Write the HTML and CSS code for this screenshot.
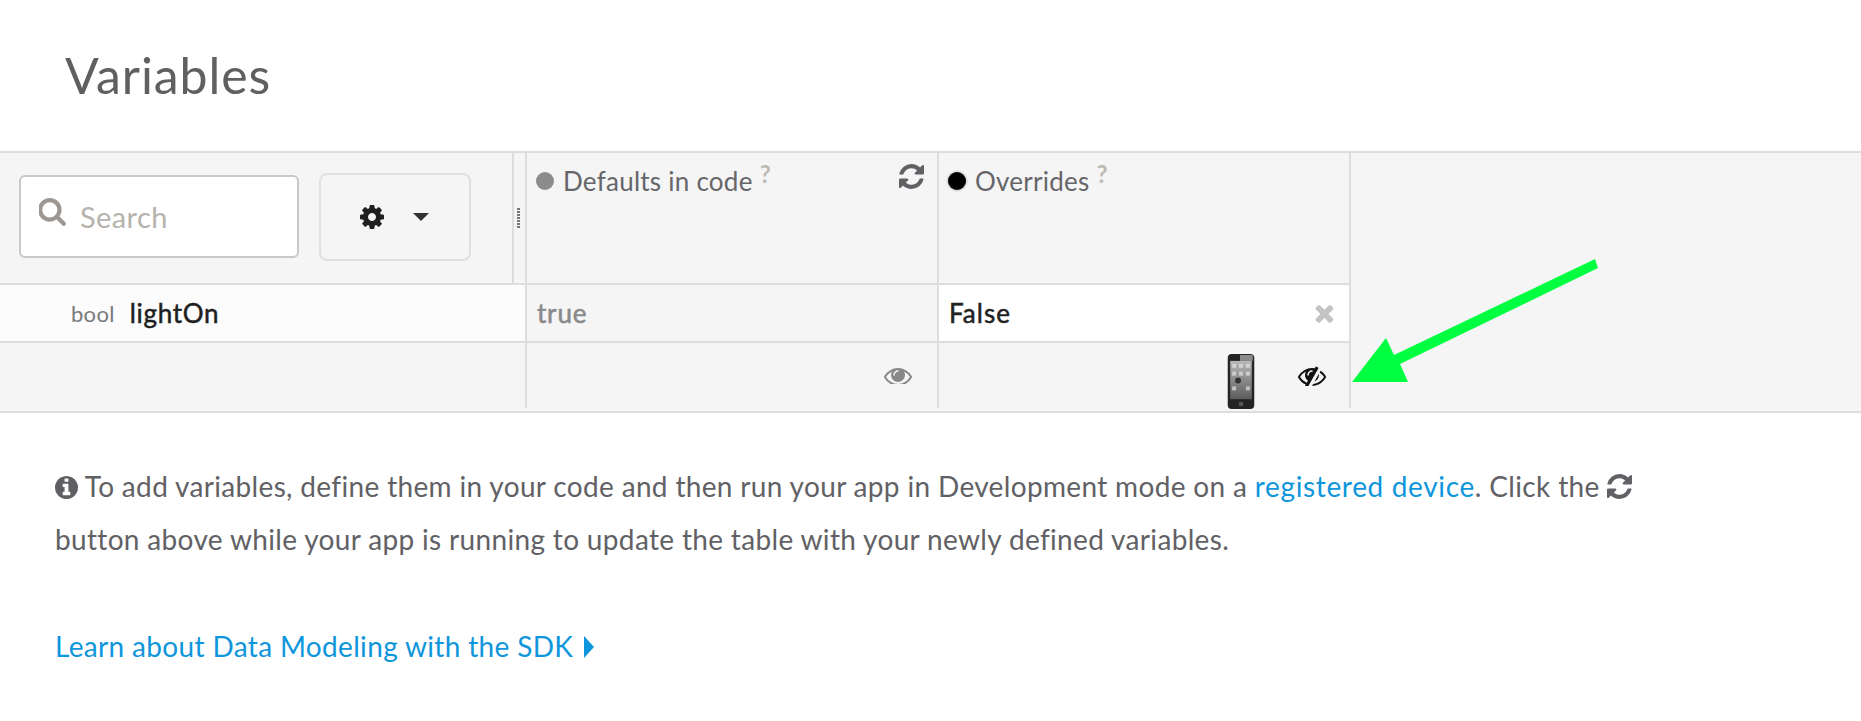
FILE: index.html
```html
<!DOCTYPE html>
<html lang="en">
<head>
<meta charset="utf-8">
<title>Variables</title>
<link rel="stylesheet" href="styles.css">
</head>
<body>
<svg class="defs" width="0" height="0" aria-hidden="true">
  <symbol id="i-refresh" viewBox="128 128 1536 1536"><path d="M1639 1056q0 5-1 7-64 268-268 434.500t-478 166.500q-146 0-282.500-55t-243.500-157l-129 129q-19 19-45 19t-45-19-19-45v-448q0-26 19-45t45-19h448q26 0 45 19t19 45-19 45l-137 137q71 66 161 102t187 36q134 0 250-65t186-179q11-17 53-117 8-23 30-23h192q13 0 22.500 9.500t9.500 22.500zm25-800v448q0 26-19 45t-45 19h-448q-26 0-45-19t-19-45 19-45l138-138q-148-137-349-137-134 0-250 65t-186 179q-11 17-53 117-8 23-30 23h-199q-13 0-22.500-9.500t-9.500-22.500v-7q65-268 270-434.500t480-166.500q146 0 284 55.500t245 156.500l130-129q19-19 45-19t45 19 19 45z"/></symbol>
</svg>
<main class="page">
  <h1 class="title">Variables</h1>
  <section class="band">
    <div class="head-left">
      <div class="tools">
        <div class="search">
          <svg class="search-icon" viewBox="128 128 1600 1664"><path d="M1216 832q0-185-131.500-316.500t-316.500-131.500-316.500 131.500-131.500 316.500 131.500 316.500 316.500 131.500 316.500-131.500 131.500-316.500zm512 832q0 52-38 90t-90 38q-54 0-90-38l-343-342q-179 124-399 124-143 0-273.500-55.500t-225-150-150-225-55.500-273.500 55.500-273.500 150-225 225-150 273.500-55.500 273.500 55.500 225 150 150 225 55.500 273.500q0 220-124 399l343 343q37 37 37 90z"/></svg>
          <span class="placeholder">Search</span>
        </div>
        <div class="gear-btn">
          <svg class="gear" viewBox="128 128 1536 1536"><path d="M1152 896q0-106-75-181t-181-75-181 75-75 181 75 181 181 75 181-75 75-181zm512-109v222q0 12-8 23t-20 13l-185 28q-19 54-39 91 35 50 107 138 10 12 10 25t-9 23q-27 37-99 108t-94 71q-12 0-26-9l-138-108q-44 23-91 38-16 136-29 186-7 28-36 28h-222q-14 0-24.500-8.500t-11.500-21.500l-28-184q-49-16-90-37l-141 107q-10 9-25 9-14 0-25-11-126-114-165-168-7-10-7-23 0-12 8-23 15-21 51-66.500t54-70.500q-27-50-41-99l-183-27q-13-2-21-12.500t-8-23.500v-222q0-12 8-23t19-13l186-28q14-46 39-92-40-57-107-138-10-12-10-24 0-10 9-23 26-36 98.500-107.500t94.500-71.500q13 0 26 10l138 107q44-23 91-38 16-136 29-186 7-28 36-28h222q14 0 24.500 8.500t11.500 21.500l28 184q49 16 90 37l142-107q9-9 24-9 13 0 25 10 129 119 165 170 7 8 7 22 0 12-8 23-15 21-51 66.500t-54 70.500q26 50 41 98l183 28q13 2 21 12.500t8 23.500z"/></svg>
          <span class="caret"></span>
        </div>
      </div>
      <div class="grip"><span class="grip-dots"></span></div>
    </div>
    <div class="head-col">
      <span class="dot dot-grey"></span>
      <span class="head-label">Defaults in code</span>
      <sup class="help">?</sup>
      <svg class="head-refresh"><use href="#i-refresh"/></svg>
    </div>
    <div class="head-col head-last">
      <span class="dot dot-black"></span>
      <span class="head-label">Overrides</span>
      <sup class="help">?</sup>
    </div>
    <div class="side"></div>

    <div class="name-cell"><span class="type">bool</span><span class="name">lightOn</span></div>
    <div class="default-cell">true</div>
    <div class="override-cell">
      <span class="override-value">False</span>
      <svg class="clear" viewBox="300 300 1200 1260"><path d="M1490 1322q0 40-28 68l-136 136q-28 28-68 28t-68-28l-294-294-294 294q-28 28-68 28t-68-28l-136-136q-28-28-28-68t28-68l294-294-294-294q-28-28-28-68t28-68l136-136q28-28 68-28t68 28l294 294 294-294q28-28 68-28t68 28l136 136q28 28 28 68t-28 68l-294 294 294 294q28 28 28 68z"/></svg>
    </div>

    <div class="foot-left"></div>
    <div class="foot-default">
      <svg class="eye" viewBox="0 384 1792 1024"><path d="M1664 960q-152-236-381-353 61 104 61 225 0 185-131.500 316.500t-316.500 131.500-316.500-131.500-131.500-316.500q0-121 61-225-229 117-381 353 133 205 333.500 326.500t434.500 121.500 434.500-121.500 333.500-326.500zm-720-384q0-20-14-34t-34-14q-125 0-214.500 89.500t-89.500 214.500q0 20 14 34t34 14 34-14 14-34q0-86 61-147t147-61q20 0 34-14t14-34zm848 384q0 34-20 69-140 230-376.500 368.500t-499.500 138.500-499.500-139-376.500-368q-20-35-20-69t20-69q140-229 376.500-368t499.500-139 499.500 139 376.500 368q20 35 20 69z"/></svg>
    </div>
    <div class="foot-override">
      <svg class="phone" viewBox="0 0 28 56">
        <defs>
          <linearGradient id="phone-screen" x1="0" y1="0" x2="0" y2="1">
            <stop offset="0" stop-color="#b8b8b8"/>
            <stop offset="1" stop-color="#5c5c5c"/>
          </linearGradient>
        </defs>
        <rect x="0.5" y="0" width="27" height="56" rx="4" fill="#242424"/>
        <rect x="13" y="1" width="13" height="6" fill="#8a8a8a"/>
        <rect x="3" y="7" width="22" height="39" fill="url(#phone-screen)"/>
        <g fill="#e4e4e4" opacity="0.7">
          <rect x="5" y="10" width="4" height="4"/><rect x="12" y="10" width="4" height="4"/><rect x="19" y="10" width="4" height="4"/>
          <rect x="5" y="18" width="4" height="4"/><rect x="12" y="18" width="4" height="4"/><rect x="19" y="18" width="4" height="4"/>
          <rect x="5" y="33" width="4" height="4"/><rect x="19" y="33" width="4" height="4"/>
        </g>
        <circle cx="11" cy="27" r="3" fill="#333"/>
        <circle cx="14" cy="51" r="2.5" fill="#555"/>
      </svg>
      <svg class="eye-off" viewBox="0 256 1792 1280"><path d="M555 1335l78-141q-87-63-136-159t-49-203q0-121 61-225-229 117-381 353 167 258 427 375zm389-759q0-20-14-34t-34-14q-125 0-214.500 89.500t-89.500 214.500q0 20 14 34t34 14 34-14 14-34q0-86 61-147t147-61q20 0 34-14t14-34zm363-191q0 7-1 9-106 189-316 567t-315 566l-49 89q-10 16-28 16-12 0-134-70-16-10-16-28 0-12 44-87-143-65-263.500-173t-208.500-245q-20-31-20-69t20-69q153-235 380-371t496-136q89 0 180 17l54-97q10-16 28-16 5 0 18 6t31 15.500 33 18.500 31.500 18.500 19.500 11.500q16 10 16 27zm37 447q0 139-79 253.500t-209 164.500l280-502q8 45 8 84zm448 128q0 35-20 69-39 64-109 145-150 172-347.500 267t-419.500 95l74-132q212-18 392.500-137t301.500-307q-115-179-282-294l63-112q95 64 182.500 153t144.500 184q20 34 20 69z"/></svg>
    </div>
    <svg class="arrow" viewBox="1352 259 246 123"><path d="M1595 259 L1598 268 L1400 364 L1408 382 L1352 382 L1386 338 L1394 355 Z"/></svg>
  </section>
  <section class="notes">
    <p class="note">
      <svg class="info" viewBox="128 128 1536 1536"><path d="M1152 1376v-160q0-14-9-23t-23-9h-96v-512q0-14-9-23t-23-9h-320q-14 0-23 9t-9 23v160q0 14 9 23t23 9h96v320h-96q-14 0-23 9t-9 23v160q0 14 9 23t23 9h448q14 0 23-9t9-23zm-128-896v-160q0-14-9-23t-23-9h-192q-14 0-23 9t-9 23v160q0 14 9 23t23 9h192q14 0 23-9t9-23zm640 416q0 209-103 385.500t-279.500 279.500-385.500 103-385.500-103-279.500-279.500-103-385.500 103-385.500 279.500-279.500 385.500-103 385.500 103 279.500 279.500 103 385.500z"/></svg>
      To add variables, define them in your code and then run your app in Development mode on a <a class="link link-wide" href="#">registered device</a>. Click the <svg class="inline-refresh"><use href="#i-refresh"/></svg><br>
      button above while your app is running to update the table with your newly defined variables.
    </p>
    <p class="learn"><a class="link" href="#">Learn about Data Modeling with the SDK</a><span class="learn-caret"></span></p>
  </section>
</main>
</body>
</html>
```

FILE: styles.css
```css
* { box-sizing: border-box; }
html, body { margin: 0; padding: 0; background: #fff; }
body {
  font-family: "Lato", "Liberation Sans", sans-serif;
  color: #616165;
  overflow: hidden;
}
.defs { position: absolute; }
.page { width: 1861px; height: 721px; }

.title {
  margin: 0;
  height: 151px;
  padding: 47px 0 0 65px;
  font-size: 50px;
  line-height: 56px;
  letter-spacing: .9px;
  font-weight: 400;
  color: #606063;
}

.band {
  position: relative;
  display: grid;
  grid-template-columns: 525px 412px 414px 1fr;
  grid-template-rows: 130px 58px 70px;
  height: 262px;
  background: #f5f5f5;
  border-top: 2px solid #ddd;
  border-bottom: 2px solid #ddd;
}

.head-left { display: flex; }
.tools {
  width: 514px;
  display: flex;
  align-items: center;
  gap: 20px;
  padding: 0 0 2px 19px;
  border-right: 2px solid #ddd;
}
.search {
  width: 280px;
  height: 83px;
  margin-top: -2px;
  display: flex;
  align-items: center;
  gap: 14px;
  padding: 0 0 0 18px;
  background: #fff;
  border: 2px solid #c9c9c9;
  border-radius: 6px;
}
.search-icon { width: 27px; height: 28px; fill: #9c9792; margin-top: -9px; filter: blur(.5px); }
.placeholder { font-size: 29px; letter-spacing: .4px; color: #b6b3ae; }
.gear-btn {
  width: 152px;
  height: 88px;
  display: flex;
  align-items: center;
  justify-content: center;
  gap: 29px;
  border: 2px solid #e0e0e0;
  border-radius: 8px;
}
.gear { width: 24px; height: 24px; fill: #1f1f1f; margin-left: -2px; }
.caret {
  width: 0;
  height: 0;
  border-left: 8px solid transparent;
  border-right: 8px solid transparent;
  border-top: 8px solid #333;
}
.grip { flex: 1; display: flex; align-items: center; justify-content: center; }
.grip-dots {
  width: 3px;
  height: 20px;
  margin-left: -2px;
  background: repeating-linear-gradient(#777 0 2px, transparent 2px 3px);
}

.head-col {
  position: relative;
  display: flex;
  align-items: flex-start;
  padding: 16px 0 0 9px;
  border-left: 2px solid #ddd;
}
.head-last { border-right: 2px solid #ddd; }
.dot { width: 18px; height: 18px; border-radius: 50%; margin: 3px 9px 0 0; }
.dot-grey { background: #8c8c8c; }
.dot-black { background: #000; box-shadow: 0 0 3px #999; }
.head-label { font-size: 26px; line-height: 25px; letter-spacing: .25px; color: #66666a; }
.help {
  font-size: 24px;
  line-height: 15px;
  font-weight: 700;
  color: #bcbab6;
  margin: -3px 0 0 7px;
}
.head-refresh { position: absolute; top: 11px; right: 13px; width: 25px; height: 25px; fill: #616165; }

.side { grid-row: 1 / 4; grid-column: 4; }

.name-cell {
  display: flex;
  align-items: center;
  gap: 15px;
  padding: 0 0 0 71px;
  background: #fcfcfc;
  border-top: 2px solid #ddd;
}
.type { font-size: 22px; letter-spacing: .3px; color: #79797b; }
.name { font-size: 26px; font-weight: 400; letter-spacing: .7px; -webkit-text-stroke: .5px #1e1e1e; color: #1e1e1e; }
.default-cell {
  display: flex;
  align-items: center;
  padding: 0 0 0 10px;
  font-size: 26px;
  letter-spacing: .8px;
  font-weight: 400;
  -webkit-text-stroke: .6px #8a8a8a;
  color: #8a8a8a;
  border-top: 2px solid #ddd;
  border-left: 2px solid #ddd;
}
.override-cell {
  display: flex;
  align-items: center;
  justify-content: space-between;
  padding: 0 15px 0 10px;
  background: #fff;
  font-size: 26px;
  letter-spacing: 1px;
  font-weight: 400;
  -webkit-text-stroke: .5px #222;
  color: #222;
  border-top: 2px solid #ddd;
  border-left: 2px solid #ddd;
  border-right: 2px solid #ddd;
}
.override-value { display: block; }
.clear { width: 19px; height: 19px; fill: #c4c4c4; }

.foot-left { border-top: 2px solid #ddd; }
.foot-default {
  display: flex;
  align-items: center;
  justify-content: flex-end;
  padding: 0 25px 0 0;
  margin-bottom: 3px;
  border-top: 2px solid #ddd;
  border-left: 2px solid #ddd;
}
.eye { width: 28px; height: 16px; fill: #888; }
.foot-override {
  display: flex;
  align-items: center;
  justify-content: flex-end;
  gap: 43px;
  padding: 0 23px 0 0;
  margin-bottom: 3px;
  border-top: 2px solid #ddd;
  border-left: 2px solid #ddd;
  border-right: 2px solid #ddd;
}
.phone { width: 28px; height: 55px; align-self: flex-end; margin-bottom: -1px; filter: blur(.7px); }
.eye-off { width: 28px; height: 20px; fill: #111; }

.arrow {
  position: absolute;
  left: 1352px;
  top: 106px;
  width: 246px;
  height: 123px;
  fill: #00ff40;
}

.notes { padding: 47px 0 0 55px; }
.note { margin: 0; font-size: 28px; letter-spacing: .34px; line-height: 53px; color: #616165; }
.info { width: 23px; height: 23px; fill: #5f5f63; vertical-align: -2px; }
.inline-refresh { width: 25px; height: 25px; fill: #616165; vertical-align: -2px; }
.link { color: #0e96dc; text-decoration: none; }
.link-wide { letter-spacing: .65px; }
.learn { margin: 54px 0 0; font-size: 28px; letter-spacing: .34px; line-height: 53px; display: flex; align-items: center; gap: 11px; }
.learn-caret {
  width: 0;
  height: 0;
  border-top: 11px solid transparent;
  border-bottom: 11px solid transparent;
  border-left: 10px solid #0e96dc;
}
```
